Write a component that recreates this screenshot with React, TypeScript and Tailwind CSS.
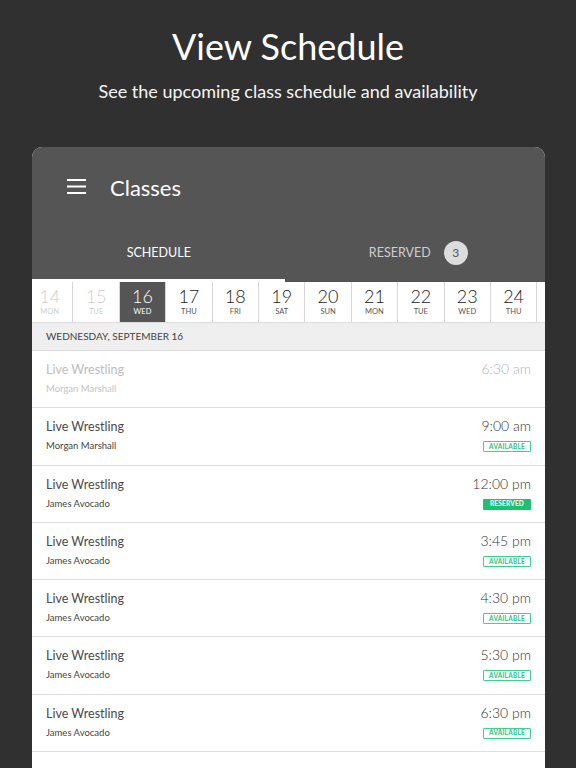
const days = [
  { n: 14, d: "MON", past: true },
  { n: 15, d: "TUE", past: true },
  { n: 16, d: "WED", active: true },
  { n: 17, d: "THU" },
  { n: 18, d: "FRI" },
  { n: 19, d: "SAT" },
  { n: 20, d: "SUN" },
  { n: 21, d: "MON" },
  { n: 22, d: "TUE" },
  { n: 23, d: "WED" },
  { n: 24, d: "THU" },
]

type Status = "past" | "available" | "reserved"

const classes: { name: string; coach: string; time: string; status: Status }[] = [
  { name: "Live Wrestling", coach: "Morgan Marshall", time: "6:30 am", status: "past" },
  { name: "Live Wrestling", coach: "Morgan Marshall", time: "9:00 am", status: "available" },
  { name: "Live Wrestling", coach: "James Avocado", time: "12:00 pm", status: "reserved" },
  { name: "Live Wrestling", coach: "James Avocado", time: "3:45 pm", status: "available" },
  { name: "Live Wrestling", coach: "James Avocado", time: "4:30 pm", status: "available" },
  { name: "Live Wrestling", coach: "James Avocado", time: "5:30 pm", status: "available" },
  { name: "Live Wrestling", coach: "James Avocado", time: "6:30 pm", status: "available" },
]

function ClassRow({ item }: { item: (typeof classes)[number] }) {
  const past = item.status === "past"
  return (
    <div className="flex h-[57.3px] shrink-0 justify-between border-b border-[#dedede] pl-[14px] pr-[14px]">
      <div className="flex flex-col pt-[9px]">
        <span className={`text-[12.5px] leading-[20px] ${past ? "text-[#bdbdbd]" : "text-[#4a4a4a]"}`}>
          {item.name}
        </span>
        <span className={`mt-[1px] text-[9.5px] leading-[16px] ${past ? "text-[#c4c4c4]" : "text-[#444]"}`}>
          {item.coach}
        </span>
      </div>
      <div className="flex flex-col items-end pt-[8px]">
        <span className={`text-[14px] font-light leading-[20px] ${past ? "text-[#b5b5b5]" : "text-[#333]"}`}>
          {item.time}
        </span>
        {item.status === "available" && (
          <span className="mt-[5px] flex h-[11px] w-[48px] items-center justify-center rounded-[1px] border border-[#3fcf8e] text-[6.5px] font-bold tracking-[0.2px] text-[#2ec27e]">
            AVAILABLE
          </span>
        )}
        {item.status === "reserved" && (
          <span className="mt-[5px] flex h-[11px] w-[48px] items-center justify-center rounded-[1px] bg-[#1fbf72] text-[6.5px] font-bold tracking-[0.2px] text-white">
            RESERVED
          </span>
        )}
      </div>
    </div>
  )
}

export default function App() {
  return (
    <div
      className="flex h-[768px] w-[576px] flex-col overflow-hidden bg-[#303030]"
      style={{ fontFamily: "Lato, 'Open Sans', sans-serif" }}
    >
      <h1 className="mt-[24px] text-center text-[36px] leading-[44px] text-white">View Schedule</h1>
      <p className="mt-[11px] text-center text-[18px] leading-[24px] text-[#f5f5f5]">
        See the upcoming class schedule and availability
      </p>

      <div className="ml-[32px] mt-[44px] flex w-[513px] flex-1 flex-col overflow-hidden rounded-t-[10px] bg-white">
        <div className="bg-[#555555]">
          <div className="flex h-[80px] items-center pl-[35px]">
            <svg width="19" height="15" viewBox="0 0 19 15" className="mt-[-1px]">
              <rect x="0" y="0" width="19" height="2" fill="white" />
              <rect x="0" y="6.5" width="19" height="2" fill="white" />
              <rect x="0" y="13" width="19" height="2" fill="white" />
            </svg>
            <span className="ml-[24px] text-[22px] text-white">Classes</span>
          </div>
          <div className="flex h-[55px]">
            <div className="flex flex-1 flex-col">
              <div className="flex flex-1 items-center justify-center pt-[1px] text-[12.5px] text-white">
                SCHEDULE
              </div>
              <div className="h-[3px] w-[253px] bg-white" />
            </div>
            <div className="flex flex-1 items-center justify-center gap-[13px] pb-[3px] pl-[6px]">
              <span className="text-[12.5px] text-[#cfcfcf]">RESERVED</span>
              <span className="flex h-[24px] w-[24px] items-center justify-center rounded-full bg-[#dcdcdc] text-[12px] text-[#555]">
                3
              </span>
            </div>
          </div>
        </div>

        <div className="flex h-[41px] shrink-0 overflow-hidden border-b border-[#dcdcdc]">
          <div className="-ml-[5px] flex">
            {days.map((day) => (
              <div
                key={day.n}
                className={`flex h-full w-[46.4px] shrink-0 flex-col items-center border-r border-[#d6d6d6] pt-[3px] ${
                  day.active ? "bg-[#555555] text-white" : day.past ? "text-[#cfcfcf]" : "text-[#222]"
                }`}
              >
                <span className="text-[18px] font-light leading-[22px]">{day.n}</span>
                <span
                  className={`text-[7.5px] leading-[10px] ${
                    day.active ? "text-white" : day.past ? "text-[#cfcfcf]" : "text-[#555]"
                  }`}
                >
                  {day.d}
                </span>
              </div>
            ))}
            <div className="h-full w-[46.4px] shrink-0 border-r border-[#d6d6d6]" />
          </div>
        </div>

        <div className="flex h-[28px] shrink-0 items-center border-b border-[#dedede] bg-[#efefef] pl-[14px] text-[10px] text-[#444]">
          WEDNESDAY, SEPTEMBER 16
        </div>

        {classes.map((c, i) => (
          <ClassRow key={i} item={c} />
        ))}
      </div>
    </div>
  )
}
